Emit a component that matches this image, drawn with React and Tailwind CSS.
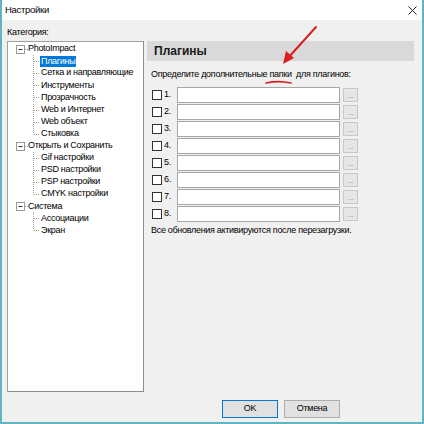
import React from 'react';

const tree = [
  { label: 'PhotoImpact', root: true },
  { label: 'Плагины', selected: true },
  { label: 'Сетка и направляющие' },
  { label: 'Инструменты' },
  { label: 'Прозрачность' },
  { label: 'Web и Интернет' },
  { label: 'Web объект' },
  { label: 'Стыковка', last: true },
  { label: 'Открыть и Сохранить', root: true },
  { label: 'Gif настройки' },
  { label: 'PSD настройки' },
  { label: 'PSP настройки' },
  { label: 'CMYK настройки', last: true },
  { label: 'Система', root: true },
  { label: 'Ассоциации' },
  { label: 'Экран', last: true },
];

function TreeRow({ item }) {
  if (item.root) {
    return (
      <div className="flex items-center h-[12.1px]">
        <svg width="20" height="12" className="shrink-0">
          <rect x="8.5" y="2.5" width="8" height="8" fill="#fff" stroke="#9a9a9a" />
          <line x1="10.5" y1="6.5" x2="14.5" y2="6.5" stroke="#333" />
          <line x1="17" y1="6.5" x2="20" y2="6.5" stroke="#a0a0a0" strokeDasharray="1 1" />
        </svg>
        <span>{item.label}</span>
      </div>
    );
  }
  return (
    <div className="flex items-center h-[12.1px]">
      <svg width="32" height="12" className="shrink-0">
        <line x1="25.5" y1="0" x2="25.5" y2={item.last ? 6.5 : 12} stroke="#a0a0a0" strokeDasharray="1 1" />
        <line x1="26" y1="6.5" x2="32" y2="6.5" stroke="#a0a0a0" strokeDasharray="1 1" />
      </svg>
      <span
        className={
          item.selected
            ? 'bg-[#0078d7] text-white px-[1px] leading-[11px]'
            : 'px-[1px]'
        }
      >
        {item.label}
      </span>
    </div>
  );
}

function PathRow({ n }) {
  return (
    <div className="flex items-center h-[17px] pl-[5px]">
      <div className="w-[10px] h-[10px] border border-[#333] bg-white shrink-0" />
      <span className="ml-[2px] w-[13px]">{n}.</span>
      <div className="w-[163px] h-[16px] border border-[#a6a6a6] bg-white" />
      <div className="ml-[3px] w-[15px] h-[14px] border border-[#c8c8c8] bg-[#e6e6e6] flex items-end justify-center text-[8px] leading-[10px] text-[#8a8a8a]">
        ...
      </div>
    </div>
  );
}

export default function App() {
  return (
    <div
      className="w-[424px] h-[424px] bg-[#f0f0f0] border-x-2 border-b-2 border-[#5fb6c2] flex flex-col text-[9px] tracking-[-0.3px] text-black relative"
      style={{ fontFamily: '"Liberation Sans", Arial, sans-serif' }}
    >
      <div className="h-[20px] bg-white flex items-center justify-between pl-[3px] pr-[5px] shrink-0">
        <span className="text-[9.5px]">Настройки</span>
        <svg width="9" height="9" viewBox="0 0 9 9">
          <path d="M0.5 0.5L8.5 8.5M8.5 0.5L0.5 8.5" stroke="#222" strokeWidth="1" />
        </svg>
      </div>

      <div className="flex-1 flex flex-col pl-[5px] pr-[8px]">
        <div className="h-[21px] flex items-center pt-[4px]">Категория:</div>

        <div className="flex gap-[3px]">
          <div className="w-[137px] h-[351px] bg-white border border-[#a0a0a0] border-r-[#8c8c8c] border-b-[#8c8c8c] pt-[1px]">
            {tree.map((item) => (
              <TreeRow key={item.label} item={item} />
            ))}
          </div>

          <div className="flex-1 flex flex-col">
            <div className="h-[20px] bg-[#d9d9d9] flex items-center pl-[7px] text-[12px] font-bold tracking-normal text-[#1a1a1a]">
              Плагины
            </div>
            <div className="h-[25px] flex items-center pl-[4px] pt-[3px]">
              Определите дополнительные папки&nbsp; для плагинов:
            </div>
            <div className="flex flex-col">
              {[1, 2, 3, 4, 5, 6, 7, 8].map((n) => (
                <PathRow key={n} n={n} />
              ))}
            </div>
            <div className="h-[16px] flex items-center pl-[4px] mt-[1px]">
              Все обновления активируются после перезагрузки.
            </div>
          </div>
        </div>

        <div className="flex-1 flex items-end justify-end gap-[6px] pb-[4px] pr-[74px]">
          <button className="w-[56px] h-[18px] bg-[#e1e1e1] border border-[#0078d7] text-[9px]">
            OK
          </button>
          <button className="w-[56px] h-[18px] bg-[#e1e1e1] border border-[#adadad] text-[9px]">
            Отмена
          </button>
        </div>
      </div>

      <svg className="absolute left-0 top-0 pointer-events-none" width="424" height="424">
        <path d="M314 27 L286 58" stroke="#d81e1e" strokeWidth="2" strokeLinecap="round" fill="none" />
        <path d="M281 64 L284 51 L292 58 Z" fill="#d81e1e" />
        <path d="M264 83 Q274 81 282 82 T289 83" stroke="#d81e1e" strokeWidth="1.6" strokeLinecap="round" fill="none" />
      </svg>
    </div>
  );
}
